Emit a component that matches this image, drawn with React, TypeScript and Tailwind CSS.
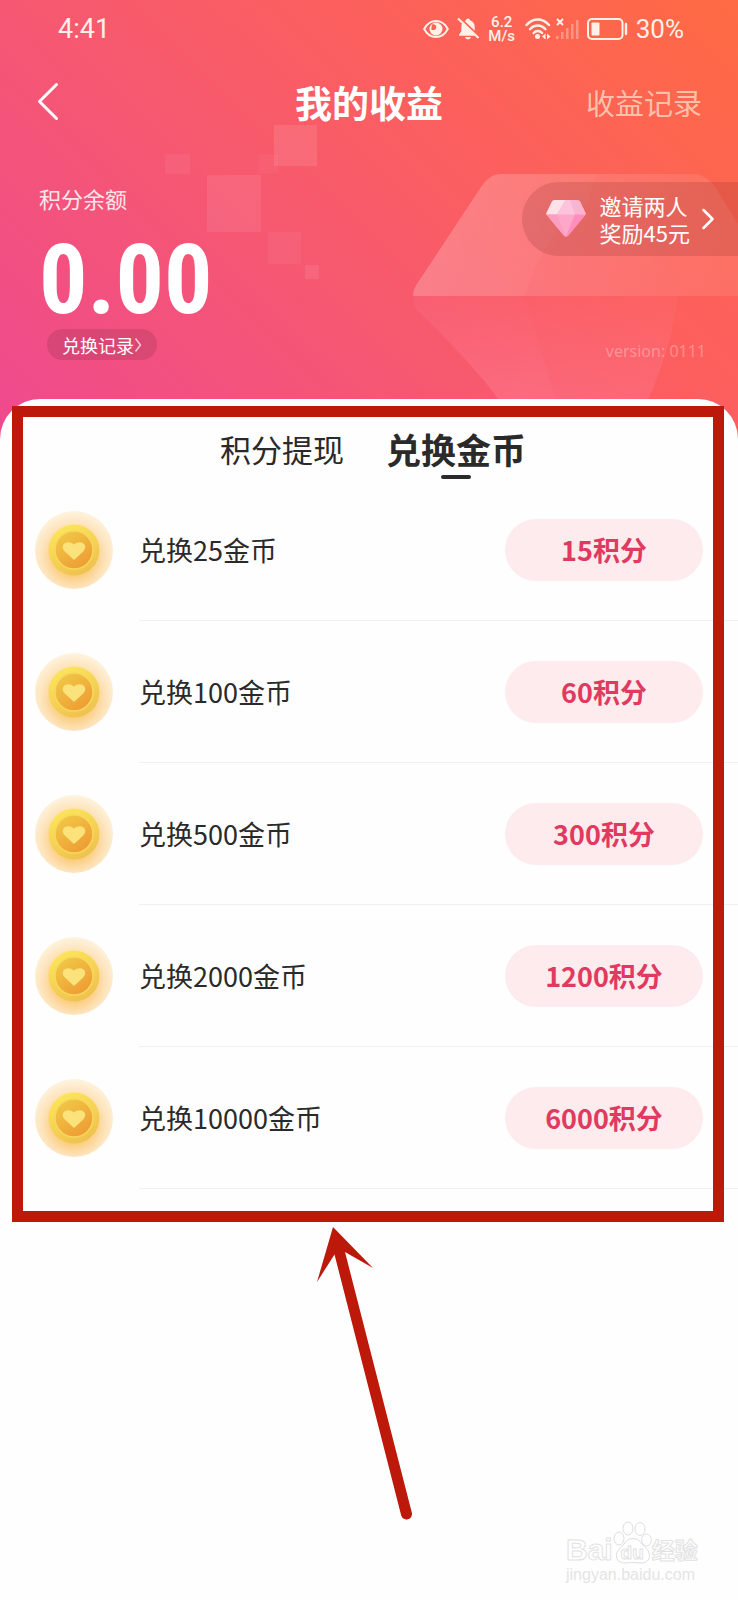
import React from "react";

type Offer = { coins: number; points: number };

const OFFERS: Offer[] = [
  { coins: 25, points: 15 },
  { coins: 100, points: 60 },
  { coins: 500, points: 300 },
  { coins: 2000, points: 1200 },
  { coins: 10000, points: 6000 },
];

function EyeIcon() {
  return (
    <svg className="h-5 w-[26px]" viewBox="0 0 26 20" fill="none" aria-hidden="true">
      <path d="M1.2 10C4 4.600 8.200 2 13 2s9 2.600 11.800 8C22 15.400 17.800 18 13 18S4 15.400 1.200 10Z" stroke="currentColor" strokeWidth="2" />
      <circle cx="13" cy="10" r="6.500" fill="currentColor" />
      <path d="M9 5.500c2.500-.8 4.500.8 4.300 3-.2 2.300-3 3.300-5 2" fill="#ff6650" />
    </svg>
  );
}

function MutedBellIcon() {
  return (
    <svg className="h-6 w-[22px]" viewBox="0 0 22 24" aria-hidden="true">
      <path d="M11 1.500c1.200 0 1.900.8 2 1.800 3 .9 4.700 3.300 4.700 6.400v4.600l2.300 3.400v1H2v-1l2.300-3.400V9.700c0-3.100 1.700-5.500 4.700-6.400.1-1 .8-1.800 2-1.800Z" fill="currentColor" />
      <path d="M8 20h6c-.4 1.500-1.500 2.300-3 2.300S8.400 21.500 8 20Z" fill="currentColor" />
      <path d="M2 0 22.500 19.500" stroke="#ff6650" strokeWidth="2" />
      <path d="M1 1.500 21.500 21" stroke="currentColor" strokeWidth="2" />
    </svg>
  );
}

function WifiIcon() {
  return (
    <svg className="h-[22px] w-[26px]" viewBox="0 0 26 22" fill="none" aria-hidden="true">
      <g stroke="currentColor" strokeWidth="2.400" strokeLinecap="round">
        <path d="M1.500 7C8-.4 17.500-.4 24 7" />
        <path d="M5 11.200c4.500-5 11-5 15.500 0" />
        <path d="M8.600 15c2.500-2.700 6-2.700 8.500 0" />
      </g>
      <circle cx="12.500" cy="18.500" r="2.500" fill="currentColor" />
      <path d="M20.500 15.500v6L17 18.500ZM22 15.500v6l3.500-3Z" fill="currentColor" />
    </svg>
  );
}

function SignalIcon() {
  return (
    <svg className="h-[22px] w-6" viewBox="0 0 24 22" aria-hidden="true">
      <path d="m2 1 6 6M8 1 2 7" stroke="currentColor" strokeWidth="2" />
      <g fill="currentColor" opacity=".35">
        <rect x="1" y="18" width="2.500" height="3" />
        <rect x="6" y="14" width="2.500" height="7" />
        <rect x="11" y="10" width="2.500" height="11" />
        <rect x="16" y="6" width="2.500" height="15" />
        <rect x="21" y="2" width="2.500" height="19" />
      </g>
    </svg>
  );
}

function BatteryIcon() {
  return (
    <svg className="h-[22px] w-[41px]" viewBox="0 0 41 22" fill="none" aria-hidden="true">
      <rect x="1" y="1" width="34.500" height="20" rx="4" stroke="currentColor" strokeWidth="2" />
      <rect x="4.500" y="4.500" width="8" height="13" rx="1" fill="currentColor" />
      <path d="M39 6v10" stroke="currentColor" strokeWidth="2.400" strokeLinecap="round" />
    </svg>
  );
}

function GemIcon() {
  return (
    <svg className="h-10 w-10 shrink-0" viewBox="0 0 40 40" aria-hidden="true">
      <path d="M8.500 1h23a3 3 0 0 1 2.500 1.500L39.500 14a2 2 0 0 1-.3 2L22 36.700a2.500 2.500 0 0 1-4 0L.8 16a2 2 0 0 1-.3-2L6 2.500A3 3 0 0 1 8.500 1Z" fill="#ffa6cb" />
      <path d="M8.500 1h11L11 15.500H.2c0-.5.100-1 .3-1.500L6 2.500A3 3 0 0 1 8.500 1Z" fill="#fde3e8" />
      <path d="M19.500 1h12L29 15.500H11Z" fill="#fbc4dc" />
      <path d="M31.500 1A3 3 0 0 1 34 2.500L39.500 14c.2.500.3 1 .3 1.500H29L24 1Z" fill="#f9b4d2" />
      <path d="M.2 15.500H11l9 22a3 3 0 0 1-2-.8L.8 16Z" fill="#fb9fc0" />
      <path d="M29 15.500h10.800L22 36.700a3 3 0 0 1-2 .8Z" fill="#ff8dbd" />
    </svg>
  );
}

function Coin() {
  return (
    <svg className="h-[78px] w-[78px] shrink-0" viewBox="0 0 78 78" aria-hidden="true">
      <defs>
        <radialGradient id="coin-halo" cx=".5" cy=".58" r=".57">
          <stop offset=".4" stopColor="#fbc976" />
          <stop offset=".7" stopColor="#fde2b8" />
          <stop offset="1" stopColor="#fef3de" />
        </radialGradient>
        <linearGradient id="coin-rim" x1=".2" y1="0" x2=".7" y2="1">
          <stop offset="0" stopColor="#fde75a" />
          <stop offset="1" stopColor="#eec04e" />
        </linearGradient>
        <linearGradient id="coin-face" x1=".1" y1="0" x2=".8" y2="1">
          <stop offset="0" stopColor="#f1cb48" />
          <stop offset="1" stopColor="#ee9a32" />
        </linearGradient>
      </defs>
      <circle cx="39" cy="39" r="39" fill="url(#coin-halo)" />
      <circle cx="39" cy="39" r="25.500" fill="url(#coin-rim)" />
      <circle cx="39" cy="39" r="19" fill="url(#coin-face)" stroke="#f8d75e" strokeWidth="1.500" />
      <path d="M39 49 29.800 40.500c-2.800-2.800-2.500-6.200-.3-7.900 2.500-2 6.500-1.600 9.500 1 3-2.600 7-3 9.500-1 2.200 1.700 2.500 5.100-.3 7.900Z" fill="#fbe27a" />
    </svg>
  );
}

function HeaderDecor() {
  return (
    <>
      <svg className="absolute left-0 top-0 h-[300px] w-[340px]" viewBox="0 0 340 300" fill="#fff" aria-hidden="true">
        <rect x="274" y="125" width="43" height="41" opacity=".1" />
        <rect x="259" y="155" width="19" height="18" opacity=".04" />
        <rect x="165" y="154" width="25" height="20" opacity=".05" />
        <rect x="207" y="175" width="54" height="57" opacity=".08" />
        <rect x="268" y="232" width="33" height="32" opacity=".05" />
        <rect x="305" y="265" width="14" height="14" opacity=".08" />
      </svg>
      <svg className="absolute right-0 top-[174px] h-[226px] w-[325px]" viewBox="0 0 325 226" aria-hidden="true">
        <defs>
          <linearGradient id="gem-top" x1="0" y1="0" x2="1" y2="0">
            <stop offset="0" stopColor="#fff" stopOpacity=".2" />
            <stop offset=".5" stopColor="#fff" stopOpacity=".14" />
            <stop offset="1" stopColor="#fff" stopOpacity=".08" />
          </linearGradient>
          <linearGradient id="gem-bottom" x1="0" y1="0" x2="0" y2="1">
            <stop offset="0" stopColor="#ff8098" stopOpacity=".12" />
            <stop offset="1" stopColor="#ff8098" stopOpacity=".45" />
          </linearGradient>
        </defs>
        <path d="M88 0h191q15 0 25 16l21 34v72H0q0-6 4-12L68 13Q76 0 88 0Z" fill="url(#gem-top)" />
        <path d="M88 0h97q-8 14-10 30-40 20-63 92H0q0-6 4-12L68 13Q76 0 88 0Z" fill="#fff" opacity=".03" />
        <path d="M112 122H0q0 8 4 14 56 54 82 90h57Z" fill="url(#gem-bottom)" />
        <path d="M112 122h153q-6 50-30 104h-92Z" fill="url(#gem-bottom)" opacity=".75" />
        <path d="M265 122h60v104h-90q24-54 30-104Z" fill="#ff5f5f" opacity=".25" />
      </svg>
    </>
  );
}

function Header() {
  return (
    <header className="relative overflow-hidden bg-[linear-gradient(44deg,#ef498f_0%,#f55774_36%,#fc5f5e_65%,#ff6b43_100%)] pb-[76px] text-white">
      <HeaderDecor />
      <div className="relative flex h-[58px] items-center justify-between pl-[58px] pr-[54px] font-['Roboto',sans-serif] text-[#fff0e8]">
        <time className="text-[27px] leading-8">4:41</time>
        <div className="flex items-center">
          <EyeIcon />
          <span className="ml-2 flex"><MutedBellIcon /></span>
          <span className="ml-2 flex w-[30px] flex-col text-center text-[15px] font-medium leading-[14px]">
            <span>6.2</span>
            <span>M/s</span>
          </span>
          <span className="ml-2 flex"><WifiIcon /></span>
          <span className="ml-1 flex"><SignalIcon /></span>
          <span className="ml-2 flex"><BatteryIcon /></span>
          <span className="ml-2 text-[26px] leading-8">30%</span>
        </div>
      </div>

      <nav className="relative grid h-[88px] grid-cols-[1fr_auto_1fr] items-center pl-9 pr-9">
        <button type="button" aria-label="返回" className="flex w-8">
          <svg className="h-10 w-6" viewBox="0 0 24 40" fill="none" stroke="currentColor" strokeWidth="3" strokeLinecap="round" strokeLinejoin="round" aria-hidden="true">
            <path d="M20.500 2.500 3.500 19.500l17 17" />
          </svg>
        </button>
        <h1 className="text-[37px] font-bold leading-[48px]">我的收益</h1>
        <a href="#income" className="justify-self-end text-[29px] leading-10 text-[#ffd9c4]/80">收益记录</a>
      </nav>

      <div className="relative flex items-start justify-between pt-9">
        <div className="flex flex-col items-start pl-[39px]">
          <p className="text-[22px] leading-8 text-white/85">积分余额</p>
          <p className="mt-[26px] font-['Roboto_Condensed','Open_Sans_Condensed','Liberation_Sans_Narrow','Roboto',sans-serif] text-[96px] font-bold leading-[80px]">0.00</p>
          <a href="#exchange" className="ml-2 mt-[9px] flex h-[31px] w-[110px] items-center justify-center rounded-full bg-black/10 text-[18px] leading-6">
            兑换记录
            <svg className="h-4 w-2" viewBox="0 0 8 16" fill="none" stroke="currentColor" strokeWidth="1.500" opacity=".7" aria-hidden="true">
              <path d="m1.500 1.500 5 6.500-5 6.500" />
            </svg>
          </a>
        </div>
        <div className="flex flex-col items-end">
          <button type="button" className="flex h-[74px] items-center rounded-l-full bg-[#702020]/17 pl-6 pr-6 text-left">
            <GemIcon />
            <span className="ml-[14px] whitespace-nowrap text-[22px] leading-[27px]">邀请两人<br />奖励45元</span>
            <svg className="ml-3 h-6 w-3" viewBox="0 0 12 24" fill="none" stroke="currentColor" strokeWidth="2.500" strokeLinecap="round" strokeLinejoin="round" aria-hidden="true">
              <path d="m1.500 3 9 9-9 9" />
            </svg>
          </button>
          <p className="mr-8 mt-[83px] font-['Noto_Sans',sans-serif] text-[16px] leading-6 text-white/30">version: 0111</p>
        </div>
      </div>
    </header>
  );
}

function OfferRow({ coins, points }: Offer) {
  return (
    <li className="flex h-[142px] items-center gap-[26px] pl-[35px]">
      <Coin />
      <div className="flex h-full flex-1 items-center justify-between border-b border-[#f0f0f0] pr-[35px]">
        <span className="text-[27px] leading-10 text-[#2a2a2a]">兑换{coins}金币</span>
        <button type="button" className="h-[62px] w-[198px] rounded-full bg-[#fdebee] text-[27px] font-bold leading-10 text-[#e03a60]">
          {points}积分
        </button>
      </div>
    </li>
  );
}

function Watermark() {
  return (
    <div className="flex w-[132px] flex-col font-['Liberation_Sans','Noto_Sans_CJK_SC',sans-serif] text-white">
      <div className="flex items-end [-webkit-text-stroke:1px_#e2e2e2]">
        <span className="text-[30px] font-bold leading-[30px]">Bai</span>
        <span className="relative flex h-[44px] w-[39px] items-end justify-center">
          <svg className="absolute inset-0 h-full w-full" viewBox="0 0 39 44" fill="#fff" stroke="#dedede" aria-hidden="true">
            <path d="M20 17.500c4.500 0 7 2.500 9 5.500 3 4 7.500 6 7.500 11.500 0 5-3.500 7.500-8.500 7.500-3 0-5-.5-8-.5s-5 .5-8 .5c-5 0-8.500-2.500-8.500-7.500C3.500 29 8 27 11 23c2-3 4.500-5.500 9-5.500Z" />
            <ellipse cx="6" cy="17.500" rx="5" ry="6.500" />
            <ellipse cx="15" cy="7.500" rx="5" ry="6.500" />
            <ellipse cx="27" cy="8" rx="5" ry="6.500" />
            <ellipse cx="33.500" cy="19" rx="4.800" ry="6" />
          </svg>
          <span className="relative text-[19px] font-bold leading-[24px]">du</span>
        </span>
        <span className="text-[23px] font-bold leading-[28px]">经验</span>
      </div>
      <span className="text-[16px] leading-5 text-[#e4e4e4]">jingyan.baidu.com</span>
    </div>
  );
}

export default function App() {
  return (
    <div className="min-h-screen bg-[#fefefe] font-['Noto_Sans_CJK_SC','Noto_Sans',sans-serif]">
      <Header />
      <main className="relative -mt-10 rounded-t-[40px] bg-[#fefefe] pb-[33px]">
        <div role="tablist" className="flex h-20 items-center justify-center gap-[42px] pl-2 pt-5 text-[#2a2a2a]">
          <button type="button" role="tab" aria-selected="false" className="text-[31px] leading-[48px]">积分提现</button>
          <button type="button" role="tab" aria-selected="true" className="relative text-[35px] font-bold leading-[48px]">
            兑换金币
            <span className="absolute -bottom-[6px] left-1/2 h-1 w-[30px] -translate-x-1/2 rounded-full bg-[#2a2a2a]" />
          </button>
        </div>
        <ul>
          {OFFERS.map((offer) => (
            <OfferRow key={offer.coins} {...offer} />
          ))}
        </ul>
        <div className="pointer-events-none absolute bottom-0 left-3 right-[14px] top-[7px] border-[11px] border-[#bc190a]" />
      </main>
      <footer className="flex items-end justify-between pl-[316px] pr-10 pt-[5px]">
        <svg className="h-[294px] w-[98px] shrink-0" viewBox="0 0 98 294" fill="#bc190a" aria-hidden="true">
          <path d="M17 0 57 41 29 25 95.800 285.500a5.400 5.400 0 0 1-10.600 3L18.500 27.500 1 55Z" />
        </svg>
        <div className="-mb-16">
          <Watermark />
        </div>
      </footer>
    </div>
  );
}
